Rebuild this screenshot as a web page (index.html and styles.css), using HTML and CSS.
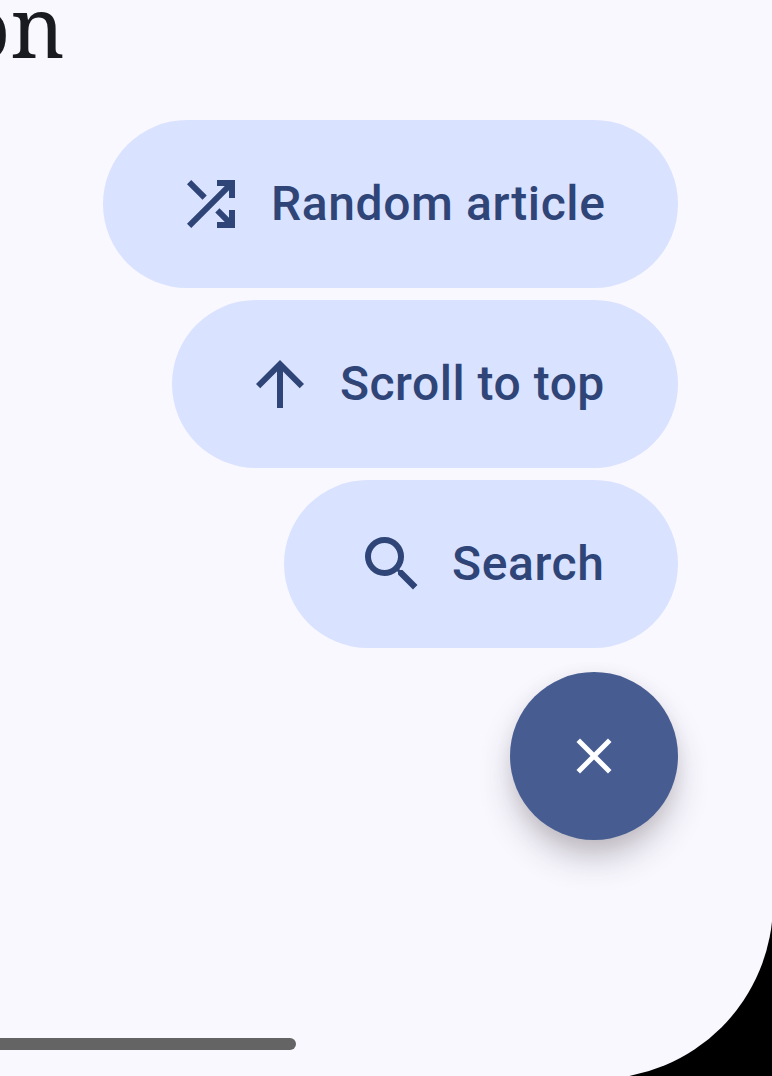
FILE: index.html
```html
<!DOCTYPE html>
<html lang="en">
<head>
<meta charset="utf-8">
<title>Article</title>
<link rel="stylesheet" href="styles.css">
</head>
<body>
<main class="screen">
  <h1 class="title">on</h1>
  <nav class="menu">
    <button class="item item-random">
      <svg class="icon" viewBox="0 0 24 24"><path d="M10.59 9.17 5.41 4 4 5.41l5.17 5.17 1.42-1.41zM14 4v2h2.59L4 18.59 5.41 20 18 7.41V10h2V4h-6zm.83 9.41-1.41 1.41L16.59 18H14v2h6v-6h-2v2.59l-3.17-3.18z"/></svg>
      <span>Random article</span>
    </button>
    <button class="item item-top">
      <svg class="icon" viewBox="0 0 24 24"><path d="m4 12 1.41 1.41L11 7.83V20h2V7.83l5.58 5.59L20 12l-8-8-8 8z"/></svg>
      <span>Scroll to top</span>
    </button>
    <button class="item item-search">
      <svg class="icon" viewBox="0 0 24 24"><path d="M15.5 14h-.79l-.28-.27A6.471 6.471 0 0 0 16 9.5 6.5 6.5 0 1 0 9.5 16c1.61 0 3.09-.59 4.23-1.57l.27.28v.79l5 4.99L20.49 19l-4.99-5zm-6 0C7.01 14 5 11.99 5 9.5S7.01 5 9.5 5 14 7.01 14 9.5 11.99 14 9.5 14z"/></svg>
      <span>Search</span>
    </button>
  </nav>
  <button class="fab" aria-label="Close">
    <svg class="fab-icon" viewBox="0 0 24 24"><path d="M19 6.41 17.59 5 12 10.59 6.41 5 5 6.41 10.59 12 5 17.59 6.41 19 12 13.41 17.59 19 19 17.59 13.41 12z"/></svg>
  </button>
  <div class="handle"></div>
</main>
</body>
</html>
```
FILE: styles.css
```css
body {
  margin: 0;
  height: 1076px;
  overflow: hidden;
  background: #000;
}
.screen {
  box-sizing: border-box;
  width: 773px;
  height: 1079px;
  padding-right: 95px;
  display: flex;
  flex-direction: column;
  align-items: flex-end;
  overflow: hidden;
  background: #f9f8ff;
  border-bottom-right-radius: 176px;
}
.title {
  align-self: flex-start;
  height: 120px;
  margin: 0 0 0 -38px;
  font: 400 84px/52px "Noto Serif", "DejaVu Serif", serif;
  color: #1a1b20;
}
.menu {
  display: flex;
  flex-direction: column;
  align-items: flex-end;
  gap: 12px;
}
.item {
  display: flex;
  align-items: center;
  gap: 24px;
  box-sizing: border-box;
  height: 168px;
  padding: 0 0 0 72px;
  border: 0;
  border-radius: 84px;
  background: #d9e2ff;
  color: #2f4578;
  font: 500 48px/72px Roboto, sans-serif;
  letter-spacing: 0.6px;
  white-space: nowrap;
}
.item-random {
  width: 575px;
}
.item-top {
  width: 506px;
  letter-spacing: 0.5px;
}
.item-search {
  width: 394px;
}
.icon {
  flex: none;
  width: 72px;
  height: 72px;
  fill: currentColor;
}
.fab {
  display: flex;
  align-items: center;
  justify-content: center;
  flex: none;
  width: 168px;
  height: 168px;
  margin-top: 24px;
  padding: 0;
  border: 0;
  border-radius: 50%;
  background: #475d92;
  box-shadow: 0 20px 34px -4px rgba(50, 38, 45, 0.3), 0 2px 18px rgba(50, 38, 45, 0.05);
}
.fab-icon {
  width: 60px;
  height: 60px;
  fill: #fff;
}
.handle {
  align-self: flex-start;
  width: 296px;
  height: 12px;
  margin-top: 198px;
  border-radius: 0 6px 6px 0;
  background: #646464;
}
```
